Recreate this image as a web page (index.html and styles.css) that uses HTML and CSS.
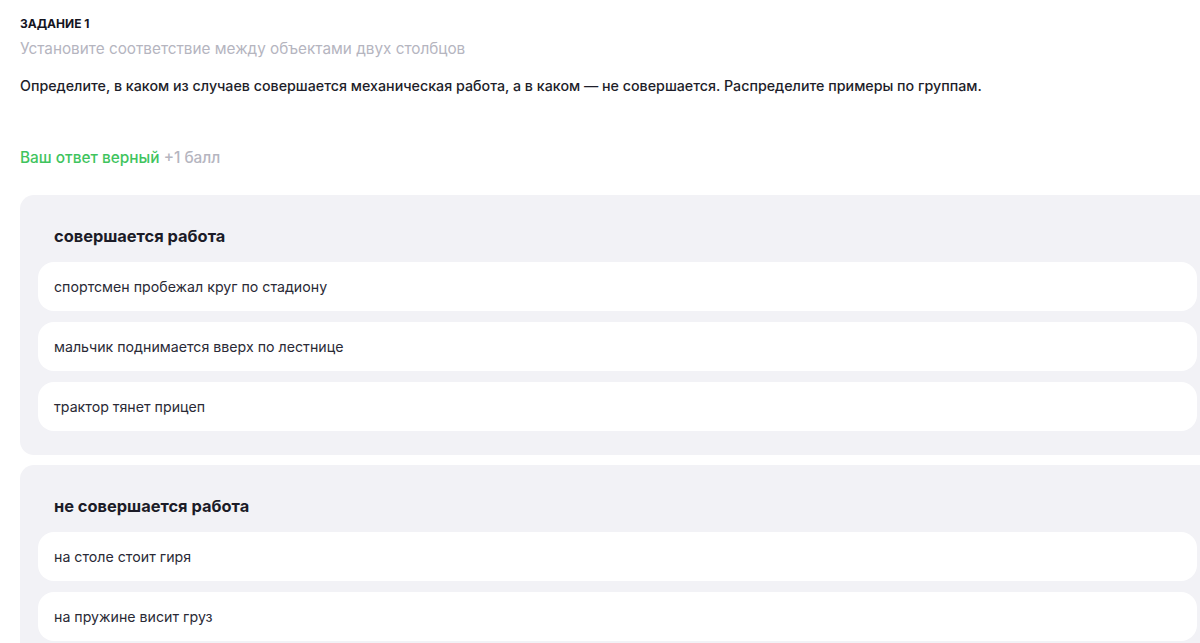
FILE: index.html
```html
<!DOCTYPE html>
<html lang="ru">
<head>
<meta charset="utf-8">
<link rel="stylesheet" href="styles.css">
</head>
<body>
<div class="page">
  <div class="task-label">ЗАДАНИЕ 1</div>
  <div class="task-type">Установите соответствие между объектами двух столбцов</div>
  <div class="question">Определите, в каком из случаев совершается механическая работа, а в каком — не совершается. Распределите примеры по группам.</div>
  <div class="result"><span class="ok">Ваш ответ верный</span> <span class="pts">+1 балл</span></div>
  <div class="groups">
    <div class="group">
      <div class="group-title">совершается работа</div>
      <div class="items">
        <div class="item">спортсмен пробежал круг по стадиону</div>
        <div class="item">мальчик поднимается вверх по лестнице</div>
        <div class="item">трактор тянет прицеп</div>
      </div>
    </div>
    <div class="group">
      <div class="group-title">не совершается работа</div>
      <div class="items">
        <div class="item">на столе стоит гиря</div>
        <div class="item">на пружине висит груз</div>
      </div>
    </div>
  </div>
</div>
</body>
</html>
```
FILE: styles.css
```css
html, body {
  margin: 0;
  padding: 0;
  background: #ffffff;
  overflow: hidden;
}
body {
  font-family: Inter, "Noto Sans", sans-serif;
  color: #1c1c28;
}
.page {
  padding: 16px 0 0 20px;
  width: 1195px;
}
.task-label {
  font-size: 12px;
  font-weight: 700;
  line-height: 16px;
  color: #15151f;
}
.task-type {
  margin-top: 8px;
  font-size: 15.3px;
  line-height: 18px;
  color: #b5b5bf;
}
.question {
  margin-top: 19px;
  font-size: 14.25px;
  font-weight: 500;
  line-height: 18px;
  color: #1e1e2a;
}
.result {
  margin-top: 54px;
  font-size: 15.4px;
  font-weight: 500;
  line-height: 18px;
}
.ok {
  color: #3fc45e;
}
.pts {
  color: #b5b5bf;
}
.groups {
  margin-top: 28px;
  display: flex;
  flex-direction: column;
  gap: 10px;
}
.group {
  background: #f2f2f6;
  border-radius: 14px;
  padding: 30px 18px 24px;
}
.group-title {
  padding-left: 16px;
  font-size: 16.4px;
  font-weight: 700;
  line-height: 22px;
  color: #1c1c28;
}
.items {
  margin-top: 15px;
  display: flex;
  flex-direction: column;
  gap: 11px;
}
.item {
  background: #ffffff;
  border-radius: 16px;
  height: 49px;
  display: flex;
  align-items: center;
  padding-left: 16px;
  font-size: 14.2px;
  color: #2a2a36;
}
```
